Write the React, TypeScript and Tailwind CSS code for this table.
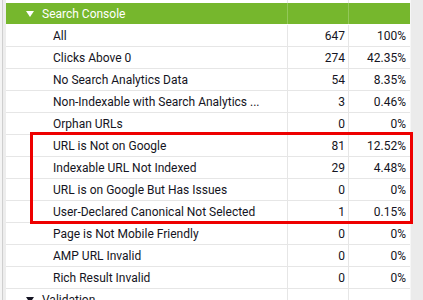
import React from "react";

const rows: [string, string, string][] = [
  ["All", "647", "100%"],
  ["Clicks Above 0", "274", "42.35%"],
  ["No Search Analytics Data", "54", "8.35%"],
  ["Non-Indexable with Search Analytics ...", "3", "0.46%"],
  ["Orphan URLs", "0", "0%"],
  ["URL is Not on Google", "81", "12.52%"],
  ["Indexable URL Not Indexed", "29", "4.48%"],
  ["URL is on Google But Has Issues", "0", "0%"],
  ["User-Declared Canonical Not Selected", "1", "0.15%"],
  ["Page is Not Mobile Friendly", "0", "0%"],
  ["AMP URL Invalid", "0", "0%"],
  ["Rich Result Invalid", "0", "0%"],
];

function Tri({ color }: { color: string }) {
  return (
    <svg width="8" height="6" viewBox="0 0 8 6" className="shrink-0">
      <polygon points="0,0 8,0 4,6" fill={color} />
    </svg>
  );
}

export default function App() {
  return (
    <div
      className="relative w-[423px] h-[300px] overflow-hidden bg-white flex text-[12px] text-[#141422]"
      style={{ fontFamily: "Roboto, 'Liberation Sans', sans-serif" }}
    >
      <div className="w-[6px] flex shrink-0">
        <div className="w-[2px] bg-[#f4f4f4]" />
        <div className="w-[1px] bg-[#cfcfcf]" />
        <div className="flex-1 bg-[#ededed]" />
      </div>
      <div className="w-[404px] flex flex-col shrink-0">
        <div className="h-[3px] shrink-0 flex">
          <div className="w-[281px]" />
          <div className="w-[61px] border-l border-[#e6e6e6]" />
          <div className="flex-1 border-l border-[#e6e6e6]" />
        </div>
        <div className="h-[22px] shrink-0 flex bg-[#76b72d] border-b border-white">
          <div className="w-[281px] flex items-center pl-[20px] gap-[8px] text-white">
            <Tri color="#ffffff" />
            <span>Search Console</span>
          </div>
          <div className="w-[61px] border-l border-[#93c85a]" />
          <div className="flex-1 border-l border-[#93c85a]" />
        </div>
        {rows.map(([name, n, p]) => (
          <div key={name} className="h-[22px] flex border-b border-[#e6e6e6] shrink-0">
            <div className="w-[281px] flex items-center pl-[47px] pt-[1px] whitespace-nowrap overflow-hidden">
              {name}
            </div>
            <div className="w-[61px] border-l border-[#e6e6e6] flex items-center justify-end pr-[3px] pt-[1px]">
              {n}
            </div>
            <div className="flex-1 border-l border-[#e6e6e6] flex items-center justify-end pr-[4px] pt-[1px]">
              {p}
            </div>
          </div>
        ))}
        <div className="h-[22px] flex shrink-0">
          <div className="w-[281px] flex items-center pl-[20px] gap-[8px]">
            <Tri color="#141422" />
            <span>Validation</span>
          </div>
          <div className="w-[61px] border-l border-[#e6e6e6]" />
          <div className="flex-1 border-l border-[#e6e6e6]" />
        </div>
      </div>
      <div className="flex-1 bg-[#ebebeb] border-l border-[#f6f6f6]" />
      <div className="absolute left-[30px] top-[132px] w-[383px] h-[92px] border-[3px] border-[#ee0000]" />
    </div>
  );
}
